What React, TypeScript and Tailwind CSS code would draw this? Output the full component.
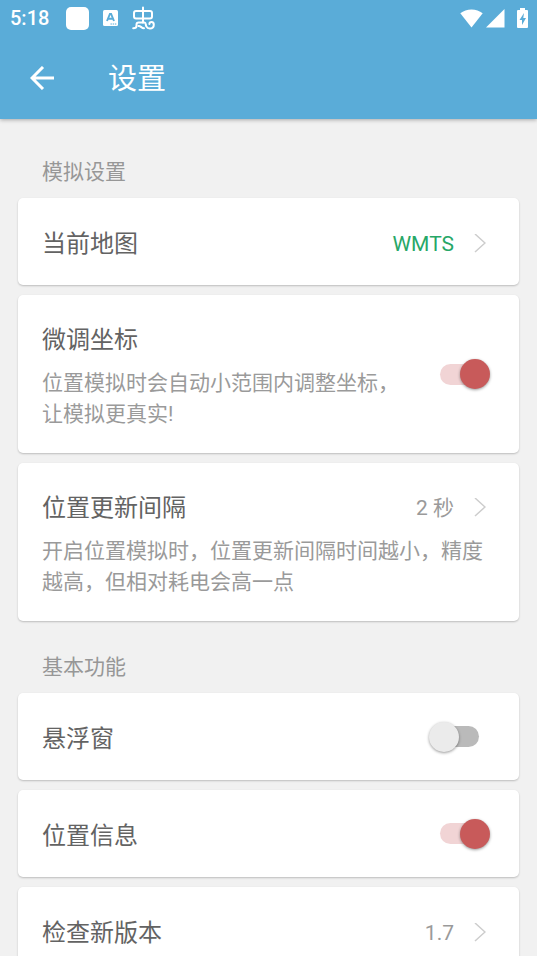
import { useState, type ReactNode } from "react";

const StatusBar = () => {
  return (
    <div className="flex h-9 items-center justify-between pl-[10px] pr-[9px]">
      <div className="flex items-center">
        <span className="text-[20px] font-medium leading-6">5:18</span>
        <span className="ml-[17px] h-[23px] w-[23px] rounded-[5px] bg-white" />
        <svg className="ml-[14px]" width="15" height="16" viewBox="0 0 15 16">
          <rect width="15" height="16" rx="1.5" fill="#fff" />
          <path
            d="M4 11 6.9 4h1.2l2.900 7M5.300 8.800h4.400"
            fill="none"
            stroke="#5aacd8"
            strokeWidth="1.9"
          />
          <path d="M7.500 14h6" stroke="#5aacd8" strokeDasharray="1.4 .8" />
        </svg>
        <svg
          className="ml-[14px]"
          width="23"
          height="24"
          viewBox="0 0 23 24"
          fill="none"
          stroke="#fff"
          strokeWidth="2"
          strokeLinecap="round"
          strokeLinejoin="round"
        >
          <path d="M11 1.500V16.500M4 5h14q2 0 2 2v3.500q0 2-2 2H4q-2 0-2-2V7q0-2 2-2Z" />
          <path d="M1.200 22.300c1.800 0 3.300-.6 3.300-2.300v-1.500c0-1.300.9-2 2.200-2h5.800c1.600 0 1 2.300 1.800 3.900.7 1.400 2 2.100 3.500 2.100 2.400 0 4-1.600 4-3.800 0-1.600-.9-2.700-2.200-2.700s-2.200.8-2.200 1.900" />
          <path d="M6.500 20c1.800-.8 2.800 2.300 5.500 2.300" />
        </svg>
      </div>
      <div className="flex items-center">
        <svg width="23" height="19" viewBox="0 0 23 19" fill="#fff">
          <path d="M11.500 18.500.3 4.300C3.500 1.800 7.200.5 11.500.5s8 1.300 11.200 3.800Z" />
        </svg>
        <svg className="ml-[3px]" width="19" height="19" viewBox="0 0 19 19" fill="#fff">
          <path d="M18.500 0v18.500H0Z" />
        </svg>
        <svg className="ml-3" width="11" height="20" viewBox="0 0 11 20">
          <path
            d="M3 0h5v2h2q1 0 1 1v16q0 1-1 1H1q-1 0-1-1V3q0-1 1-1h2Z"
            fill="#fff"
          />
          <path d="M7 5 2.500 12H5v5l4-7H6.300Z" fill="#5aacd8" />
        </svg>
      </div>
    </div>
  );
};

const Chevron = () => {
  return (
    <svg
      className="ml-5 mr-[9px] shrink-0"
      width="12"
      height="20"
      viewBox="0 0 12 20"
      fill="none"
      stroke="#cdcdcd"
      strokeWidth="1.5"
    >
      <path d="M1 0 11 9 1 18" />
    </svg>
  );
};

const SectionTitle = ({ children }: { children: ReactNode }) => {
  return (
    <h2 className="mb-[10px] px-6 text-[21px] leading-8 text-[#979797]">
      {children}
    </h2>
  );
};

const cardClass =
  "w-full min-h-[87px] rounded-[5px] bg-white px-6 text-left shadow-[0_1px_2px_rgba(0,0,0,0.22)]";
const bodyClass = "block pt-[27px] pb-[23px]";
const titleClass = "block text-[24px] leading-9 text-[#636363]";
const descriptionClass = "mt-[10px] block text-[21px] leading-[31px] text-[#9a9a9a]";

type LinkCardProps = {
  title: string;
  value: string;
  description?: string;
  highlight?: boolean;
};

const LinkCard = ({ title, value, description, highlight }: LinkCardProps) => {
  return (
    <button type="button" className={cardClass}>
      <span className={bodyClass}>
        <span className="flex items-center">
          <span className={titleClass + " flex-1"}>{title}</span>
          <span
            className={
              highlight
                ? "text-[21px] leading-9 text-[#27a767]"
                : "text-[21px] leading-9 text-[#9a9a9a]"
            }
          >
            {value}
          </span>
          <Chevron />
        </span>
        {description && <span className={descriptionClass}>{description}</span>}
      </span>
    </button>
  );
};

type SwitchCardProps = {
  title: string;
  description?: string;
  defaultChecked?: boolean;
};

const SwitchCard = ({ title, description, defaultChecked = false }: SwitchCardProps) => {
  const [checked, setChecked] = useState(defaultChecked);

  return (
    <label className={cardClass + " flex items-center gap-4"}>
      <span className={bodyClass + " flex-1"}>
        <span className={titleClass}>{title}</span>
        {description && <span className={descriptionClass}>{description}</span>}
      </span>
      <span className="relative mr-[5px] flex h-[30px] w-[61px] shrink-0 items-center">
        <input
          type="checkbox"
          role="switch"
          className="peer sr-only"
          checked={checked}
          onChange={(e) => setChecked(e.target.checked)}
        />
        <span className="mx-[11px] h-[21px] flex-1 rounded-full bg-[#bababa] peer-checked:bg-[#f1d4d5]" />
        <span className="absolute left-0 h-[30px] w-[30px] rounded-full bg-[#ebebeb] shadow-[0_1px_3px_rgba(0,0,0,0.4)] peer-checked:left-[31px] peer-checked:bg-[#c85a5a]" />
      </span>
    </label>
  );
};

const App = () => {
  return (
    <div className="flex h-screen flex-col bg-[#f1f1f1] font-[Roboto,'Noto_Sans_CJK_SC',sans-serif]">
      <header className="relative bg-[#5aacd8] text-white shadow-[0_1px_4px_rgba(0,0,0,0.3)]">
        <StatusBar />
        <div className="flex h-[83px] items-center pl-[30px]">
          <button type="button" aria-label="返回">
            <svg
              width="24"
              height="24"
              viewBox="0 0 24 24"
              fill="none"
              stroke="#fff"
              strokeWidth="3"
            >
              <path d="M24 12H2M13 1 2 12l11 11" />
            </svg>
          </button>
          <h1 className="ml-[54px] pt-[2px] text-[29px] leading-10">设置</h1>
        </div>
      </header>
      <main className="flex-1 overflow-y-auto px-[18px] pb-6 [scrollbar-width:none]">
        <section className="pt-[37px]">
          <SectionTitle>模拟设置</SectionTitle>
          <div className="flex flex-col gap-[10px]">
            <LinkCard title="当前地图" value="WMTS" highlight />
            <SwitchCard
              title="微调坐标"
              description="位置模拟时会自动小范围内调整坐标，让模拟更真实!"
              defaultChecked
            />
            <LinkCard
              title="位置更新间隔"
              value="2 秒"
              description="开启位置模拟时，位置更新间隔时间越小，精度越高，但相对耗电会高一点"
            />
          </div>
        </section>
        <section className="pt-[30px]">
          <SectionTitle>基本功能</SectionTitle>
          <div className="flex flex-col gap-[10px]">
            <SwitchCard title="悬浮窗" />
            <SwitchCard title="位置信息" defaultChecked />
            <LinkCard title="检查新版本" value="1.7" />
          </div>
        </section>
      </main>
    </div>
  );
};

export default App;
